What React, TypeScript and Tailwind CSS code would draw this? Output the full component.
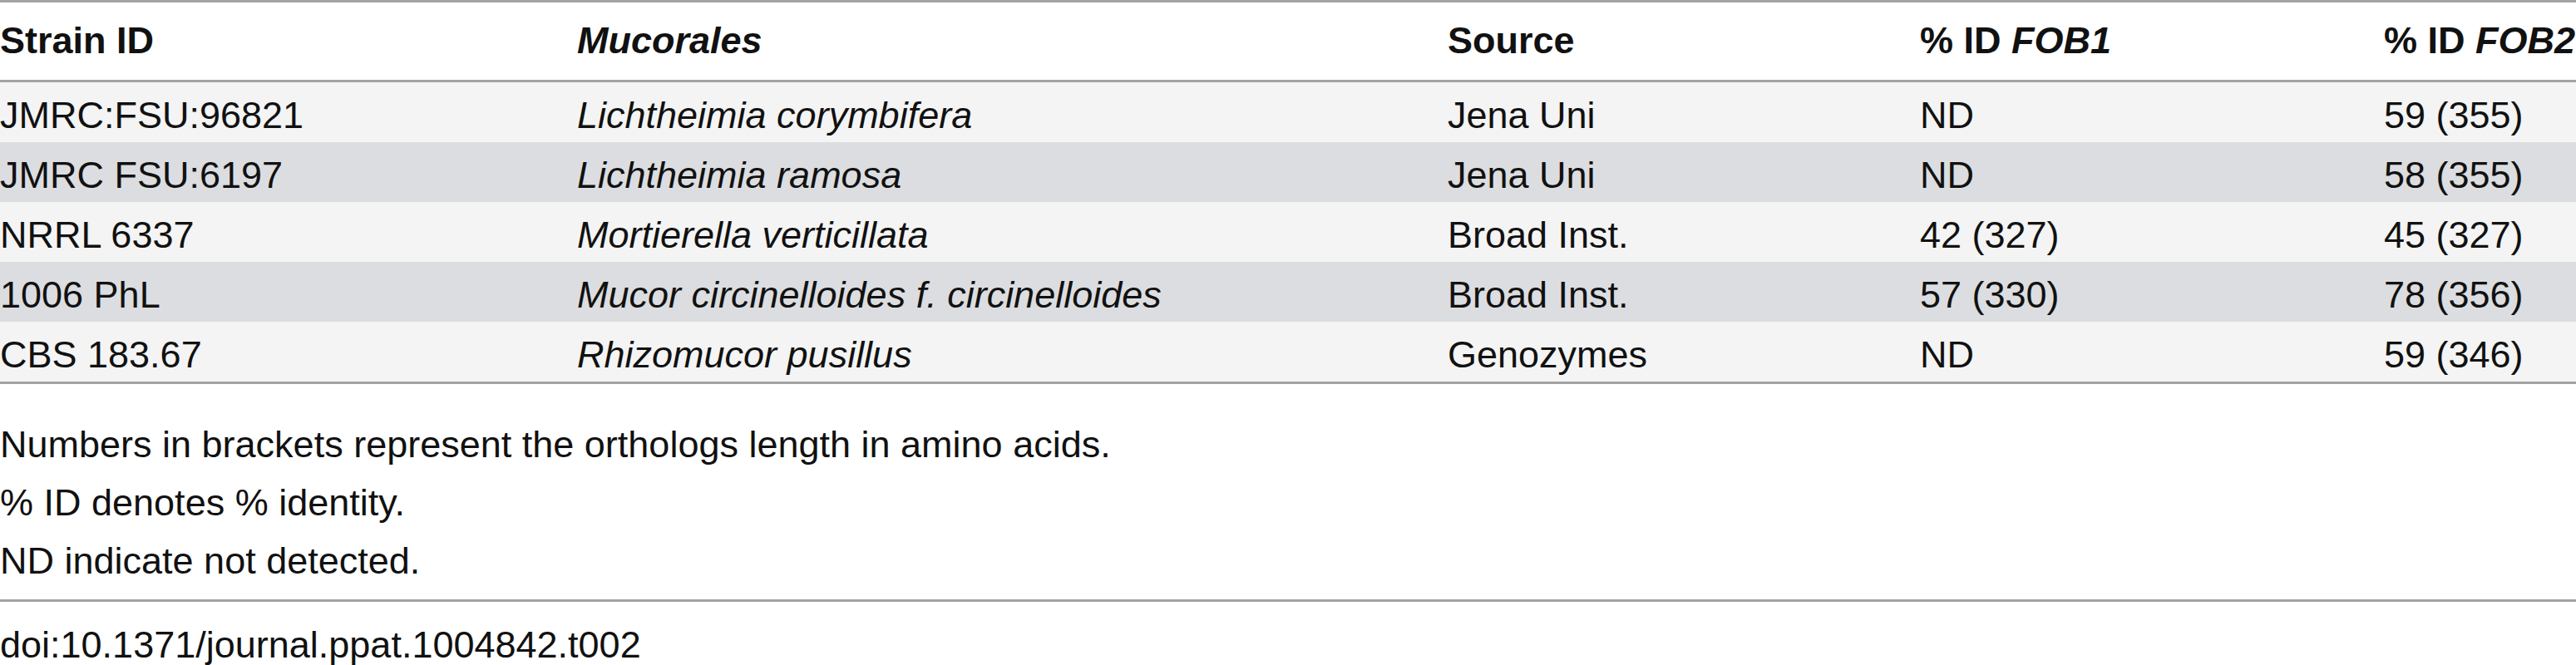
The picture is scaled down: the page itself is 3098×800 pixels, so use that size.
import React from 'react';

const rows = [
  { id: "JMRC:FSU:96821", species: "Lichtheimia corymbifera", source: "Jena Uni", fob1: "ND", fob2: "59 (355)" },
  { id: "JMRC FSU:6197", species: "Lichtheimia ramosa", source: "Jena Uni", fob1: "ND", fob2: "58 (355)" },
  { id: "NRRL 6337", species: "Mortierella verticillata", source: "Broad Inst.", fob1: "42 (327)", fob2: "45 (327)" },
  { id: "1006 PhL", species: "Mucor circinelloides f. circinelloides", source: "Broad Inst.", fob1: "57 (330)", fob2: "78 (356)" },
  { id: "CBS 183.67", species: "Rhizomucor pusillus", source: "Genozymes", fob1: "ND", fob2: "59 (346)" },
];

const notes = [
  "Numbers in brackets represent the orthologs length in amino acids.",
  "% ID denotes % identity.",
  "ND indicate not detected.",
];

const App = () => {
  return (
    <div className="w-[3098px] bg-white text-[#111] text-[45px] leading-[50px] font-['Liberation_Sans',Arial,sans-serif]">
      <table className="w-full border-collapse table-fixed border-t-[3px] border-b-[3px] border-[#a3a3a3]">
        <colgroup>
          <col className="w-[694px]" />
          <col className="w-[1047px]" />
          <col className="w-[568px]" />
          <col className="w-[558px]" />
          <col />
        </colgroup>
        <thead>
          <tr className="border-b-[3px] border-[#a3a3a3] h-[93px]">
            <th className="text-left font-bold pt-[21px] pb-[22px] p-0 align-top">Strain ID</th>
            <th className="text-left font-bold italic pt-[21px] pb-[22px] p-0 align-top">Mucorales</th>
            <th className="text-left font-bold pt-[21px] pb-[22px] p-0 align-top">Source</th>
            <th className="text-left font-bold pt-[21px] pb-[22px] p-0 align-top">% ID <i>FOB1</i></th>
            <th className="text-left font-bold pt-[21px] pb-[22px] p-0 align-top whitespace-nowrap">% ID <i>FOB2</i></th>
          </tr>
        </thead>
        <tbody>
          {rows.map((r, i) => (
            <tr key={i} className={i % 2 === 0 ? "bg-[#f4f4f4] h-[72px]" : "bg-[#dcdde0] h-[72px]"}>
              <td className="p-0 pt-[15px] pb-[7px] align-top whitespace-nowrap">{r.id}</td>
              <td className="p-0 pt-[15px] pb-[7px] align-top italic whitespace-nowrap">{r.species}</td>
              <td className="p-0 pt-[15px] pb-[7px] align-top whitespace-nowrap">{r.source}</td>
              <td className="p-0 pt-[15px] pb-[7px] align-top whitespace-nowrap">{r.fob1}</td>
              <td className="p-0 pt-[15px] pb-[7px] align-top whitespace-nowrap">{r.fob2}</td>
            </tr>
          ))}
        </tbody>
      </table>
      <div className="mt-[38px] leading-[70px]">
        {notes.map((n, i) => (
          <p key={i}>{n}</p>
        ))}
      </div>
      <div className="mt-[11px] h-[3px] bg-[#a3a3a3]" />
      <p className="mt-[17px] leading-[70px]">doi:10.1371/journal.ppat.1004842.t002</p>
    </div>
  );
};

export default App;
